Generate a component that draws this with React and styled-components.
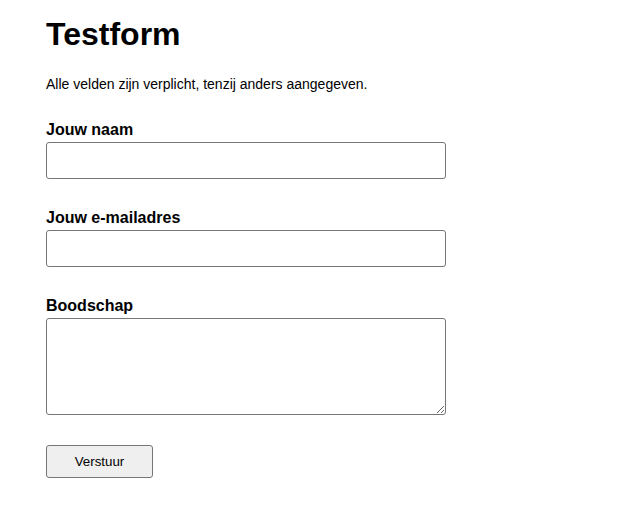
import React from 'react';
import styled, { createGlobalStyle } from 'styled-components';

const GlobalStyle = createGlobalStyle`
  body {
    margin: 0;
    background: #fff;
    font-family: "Liberation Sans", Arial, sans-serif;
    color: #000;
  }
`;

const Page = styled.div`
  padding: 16px 0 0 46px;
`;

const Title = styled.h1`
  margin: 0 0 23px;
  font-size: 32px;
  font-weight: bold;
  line-height: normal;
`;

const Intro = styled.p`
  margin: 0 0 29px;
  font-size: 14px;
  line-height: normal;
`;

const Field = styled.div`
  margin-bottom: 30px;
`;

const Label = styled.label`
  display: block;
  font-size: 16px;
  font-weight: bold;
  line-height: 18px;
  margin-bottom: 3px;
`;

const Input = styled.input`
  display: block;
  box-sizing: border-box;
  width: 400px;
  height: 37px;
  margin: 0;
  border: 1px solid #767676;
  border-radius: 3px;
  background: #fff;
  font-family: inherit;
  font-size: 14px;
`;

const TextArea = styled.textarea`
  display: block;
  box-sizing: border-box;
  width: 400px;
  height: 97px;
  margin: 0;
  border: 1px solid #767676;
  border-radius: 3px;
  background: #fff;
  font-family: inherit;
  font-size: 14px;
`;

const Button = styled.button`
  box-sizing: border-box;
  width: 107px;
  height: 33px;
  margin: 0;
  border: 1px solid #767676;
  border-radius: 3px;
  background: #efefef;
  font-family: "Liberation Sans", Arial, sans-serif;
  font-size: 13.33px;
  color: #000;
`;

export default function App() {
  return (
    <>
      <GlobalStyle />
      <Page>
        <Title>Testform</Title>
        <Intro>Alle velden zijn verplicht, tenzij anders aangegeven.</Intro>
        <form onSubmit={(e) => e.preventDefault()}>
          <Field>
            <Label htmlFor="naam">Jouw naam</Label>
            <Input id="naam" type="text" />
          </Field>
          <Field>
            <Label htmlFor="email">Jouw e-mailadres</Label>
            <Input id="email" type="email" />
          </Field>
          <Field>
            <Label htmlFor="boodschap">Boodschap</Label>
            <TextArea id="boodschap" />
          </Field>
          <Button type="submit">Verstuur</Button>
        </form>
      </Page>
    </>
  );
}
